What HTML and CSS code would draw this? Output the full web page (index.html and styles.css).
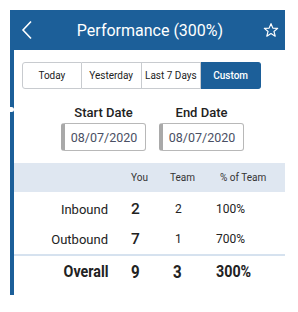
FILE: index.html
```html
<!DOCTYPE html>
<html>
<head>
<meta charset="utf-8">
<link rel="stylesheet" href="styles.css">
</head>
<body>
<div class="frame">
  <header class="topbar">
    <svg class="back" width="12" height="20" viewBox="0 0 12 20"><path d="M10 1.5 L2 10 L10 18.5" fill="none" stroke="#fff" stroke-width="1.6"/></svg>
    <div class="title">Performance (300%)</div>
    <svg class="star" width="16" height="16" viewBox="0 0 24 24"><path d="M12 2.5 L14.8 9.2 L22 9.6 L16.4 14.2 L18.3 21.3 L12 17.3 L5.7 21.3 L7.6 14.2 L2 9.6 L9.2 9.2 Z" fill="none" stroke="#fff" stroke-width="1.8" stroke-linejoin="round"/></svg>
  </header>
  <main class="content">
    <span class="handle"></span>
    <div class="seg">
      <div class="segbtn">Today</div>
      <div class="segbtn">Yesterday</div>
      <div class="segbtn">Last 7 Days</div>
      <div class="segbtn active">Custom</div>
    </div>
    <div class="dates">
      <div class="datecol">
        <div class="dlabel">Start Date</div>
        <div class="dinput">08/07/2020</div>
      </div>
      <div class="datecol">
        <div class="dlabel">End Date</div>
        <div class="dinput">08/07/2020</div>
      </div>
    </div>
    <div class="thead">
      <span class="c-label"></span>
      <span class="c-you">You</span>
      <span class="c-team">Team</span>
      <span class="c-pct">% of Team</span>
    </div>
    <div class="row">
      <span class="c-label">Inbound</span>
      <span class="c-you big">2</span>
      <span class="c-team v">2</span>
      <span class="c-pct v">100%</span>
    </div>
    <div class="row">
      <span class="c-label">Outbound</span>
      <span class="c-you big">7</span>
      <span class="c-team v">1</span>
      <span class="c-pct v">700%</span>
    </div>
    <div class="row total">
      <span class="c-label"><span class="cond r">Overall</span></span>
      <span class="c-you"><span class="cond">9</span></span>
      <span class="c-team"><span class="cond">3</span></span>
      <span class="c-pct"><span class="cond">300%</span></span>
    </div>
  </main>
</div>
</body>
</html>
```
FILE: styles.css
```css
* { box-sizing: border-box; }
body {
  margin: 0;
  background: #fff;
  font-family: Roboto, "Liberation Sans", sans-serif;
  color: #222;
}
.frame {
  margin: 10px 0 0 10px;
  width: 275px;
}
.topbar {
  height: 40px;
  background: #1c5f99;
  display: flex;
  align-items: center;
  color: #fff;
}
.back { margin-left: 11px; flex: none; }
.title {
  flex: 1;
  text-align: center;
  font-size: 16px;
  padding-left: 4px;
}
.star { margin-right: 6px; flex: none; }
.content {
  position: relative;
  border-left: 4px solid #1c5f99;
  height: 245px;
  padding-top: 12px;
}
.handle {
  position: absolute;
  left: -4px;
  top: 57px;
  width: 4px;
  height: 5px;
  background: #fff;
  border-radius: 0 3px 3px 0;
}
.seg {
  margin-left: 8px;
  display: flex;
  height: 27px;
  width: 239px;
}
.segbtn {
  width: 60px;
  border: 1px solid #c8cbcf;
  border-left-width: 0;
  display: flex;
  align-items: center;
  justify-content: center;
  font-size: 10px;
  color: #222;
}
.segbtn:first-child { border-left-width: 1px; border-radius: 3px 0 0 3px; width: 60px; }
.segbtn.active {
  background: #1c5f99;
  border-color: #1c5f99;
  color: #fff;
  font-weight: 500;
  border-radius: 0 3px 3px 0;
}
.dates {
  display: flex;
  margin-left: 47px;
  margin-top: 15px;
  gap: 13px;
}
.datecol { width: 85px; display: flex; flex-direction: column; align-items: center; }
.dlabel {
  font-size: 13px;
  font-weight: 500;
  height: 19px;
  line-height: 17px;
}
.dinput {
  width: 85px;
  height: 28px;
  border: 1px solid #b8b8b8;
  border-left: 4px solid #a9a9a9;
  border-radius: 3px;
  font-size: 12.5px;
  color: #4a4f63;
  display: flex;
  align-items: center;
  justify-content: center;
  padding-right: 2px;
}
.thead {
  margin-top: 12px;
  height: 29px;
  background: #dfe7f1;
  display: flex;
  align-items: center;
  font-size: 10px;
  color: #333;
}
.c-label { width: 94px; text-align: right; }
.c-you { width: 39px; padding-left: 23px; box-sizing: content-box; }
.c-team { width: 46px; }
.c-pct { flex: 1; }
.thead .c-pct { padding-left: 4px; }
.row {
  height: 30px;
  display: flex;
  align-items: center;
  font-size: 13px;
  color: #222;
}
.thead + .row { margin-top: 2px; }
.row .big { font-size: 15.5px; font-weight: 500; }
.row .c-team.v { font-size: 12px; padding-left: 5px; }
.row .c-pct.v { font-size: 12px; }
.row.total {
  border-top: 2px solid #d6e2ef;
  height: 32px;
  font-size: 17px;
  font-weight: 700;
}
.cond {
  display: inline-block;
  transform: scaleX(0.84);
  transform-origin: left center;
}
.cond.r { transform-origin: right center; }
.row.total .c-you { font-size: 18px; }
.row.total .c-team { font-size: 18px; padding-left: 3px; }
.row.total .c-pct { font-size: 17px; }
```
